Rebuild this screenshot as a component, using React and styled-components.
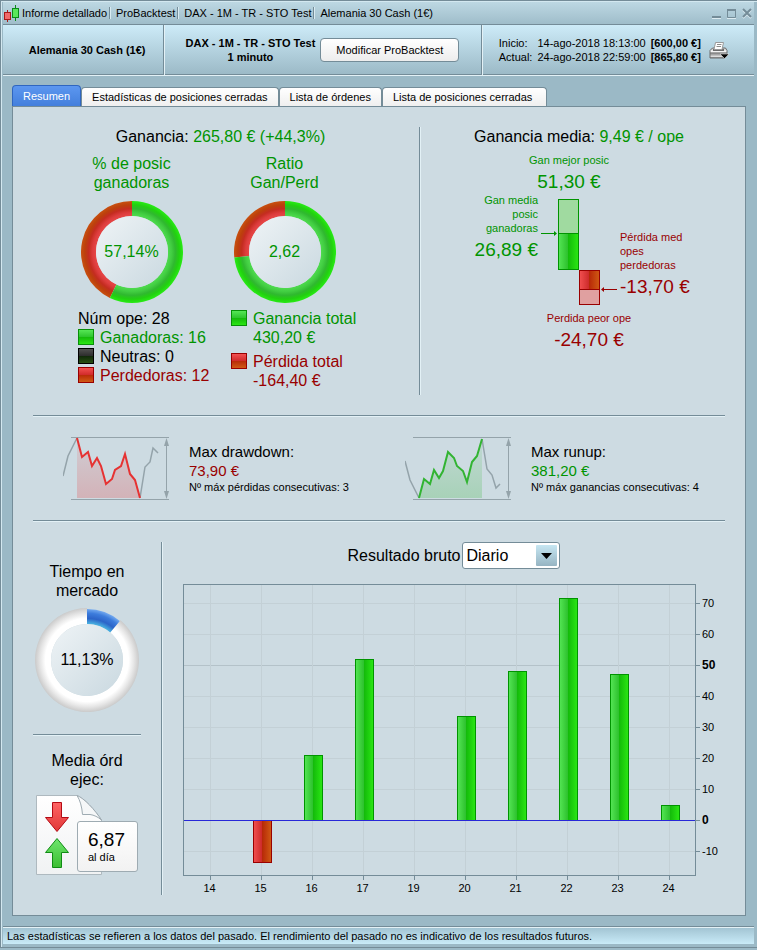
import React, { useState } from "react";
import styled, { createGlobalStyle, css } from "styled-components";

const GREEN = "#009400";
const RED = "#990000";
const LINE = "#748c98";
const LIGHT = "#e3f1f6";

const GlobalStyle = createGlobalStyle`
  * {
    box-sizing: border-box;
  }

  body {
    margin: 0;
    background: #9bb9c6;
    color: #000;
    font-family: "Liberation Sans", Arial, sans-serif;
    font-size: 11px;
    line-height: 14px;
  }

  h2, p {
    margin: 0;
    font-weight: normal;
  }

  svg {
    display: block;
  }
`;

/**
 * Window frame
 */

const Window = styled.div`
  display: flex;
  flex-direction: column;
  min-height: calc(100vh - 2px);
  padding: 1px 3px 3px 2px;
  border: 1px solid ${LINE};
  border-right: 0;
  box-shadow: inset 1px 1px #d3e8f0;
  background: #9bb9c6;
`;

const TitleBar = styled.header`
  display: flex;
  align-items: center;
  height: 22px;
  padding-right: 1px;
  background: linear-gradient(#bdd8e3, #9fbdca);
`;

const Crumb = styled.span`
  padding: 0 3px 0 5px;
  line-height: 12px;
  white-space: nowrap;

  &:not(:last-of-type) {
    border-right: 1px solid #d9ebf2;
    box-shadow: inset -1px 0 ${LINE};
  }

  &:first-of-type {
    padding-left: 2px;
  }
`;

const WindowButtons = styled.div`
  display: flex;
  gap: 3px;
  margin-left: auto;
`;

const IconButton = styled.button`
  padding: 0;
  border: 0;
  background: none;
  cursor: pointer;
`;

const Toolbar = styled.div`
  display: grid;
  grid-template-columns: 160fr 317fr 273fr;
  height: 52px;
  border-top: 1px solid ${LINE};
  border-bottom: 1px solid ${LIGHT};
  box-shadow: inset 0 -1px ${LINE};
  background: linear-gradient(#cdebf8, #9bb9c6);
`;

const ToolbarCell = styled.div`
  display: flex;
  align-items: center;
  justify-content: center;
  gap: 5px;
  white-space: nowrap;

  &:first-child {
    padding-left: 8px;
  }

  & + & {
    border-left: 1px solid ${LINE};
    box-shadow: inset 1px 0 ${LIGHT};
  }

  &:last-child {
    gap: 8px;
    padding-right: 8px;
  }
`;

const Strong = styled.strong`
  text-align: center;
`;

const ModifyButton = styled.button`
  height: 24px;
  padding: 0 15px;
  border: 1px solid ${LINE};
  border-radius: 4px;
  background: linear-gradient(#fff, #ededed);
  font: inherit;
  cursor: pointer;
`;

const Dates = styled.dl`
  display: grid;
  grid-template-columns: auto auto auto;
  column-gap: 5px;
  margin: 0;

  dd {
    margin: 0;
  }
`;

/**
 * Tabs
 */

const Tabs = styled.div`
  display: flex;
  align-items: flex-end;
  height: 21px;
  margin: 9px 9px 0;
`;

const Tab = styled.button`
  height: 19px;
  padding: 0 10px;
  border: 1px solid ${LINE};
  border-bottom: 0;
  border-radius: 4px 4px 0 0;
  background: linear-gradient(#fff, #efefef);
  font: inherit;
  white-space: nowrap;
  cursor: pointer;

  &:last-child {
    padding-right: 14px;
  }

  ${({ $active }) =>
    $active &&
    css`
      height: 21px;
      border-color: #2f66c0;
      background: linear-gradient(#5c97f0, #437fdc);
      color: #fff;
    `}
`;

const Panel = styled.main`
  flex: 1;
  display: flex;
  flex-direction: column;
  margin: 0 8px 10px 9px;
  padding: 20px;
  border: 1px solid ${LINE};
  background: #cddbe2;
`;

const Rule = styled.hr`
  width: 100%;
  height: 2px;
  margin: ${({ $compact }) => ($compact ? "14px 0 7px" : "20px 0 19px")};
  border: 0;
  border-top: 1px solid ${LINE};
  border-bottom: 1px solid ${LIGHT};
`;

const verticalRule = css`
  border-right: 1px solid ${LIGHT};
  box-shadow: inset -1px 0 ${LINE};
`;

/**
 * Text
 */

const tone = css`
  color: ${({ $tone }) => ({ gain: GREEN, loss: RED })[$tone] || "inherit"};
`;

const Heading = styled.h2`
  font-size: 16px;
  line-height: 20px;
  text-align: center;
  ${tone}
`;

const Title = styled.p`
  font-size: 16px;
  line-height: 19px;
  text-align: center;
  ${tone}
`;

const Tinted = styled.span`
  ${tone}
`;

const Amount = styled.p`
  margin-top: 4px;
  font-size: 19px;
  line-height: 22px;
`;

/**
 * Profit section
 */

const Profit = styled.section`
  display: grid;
  grid-template-columns: 388fr 304fr;
  height: 268px;
`;

const Totals = styled.div`
  padding-right: 12px;
  ${verticalRule}
`;

const Ratios = styled.div`
  display: grid;
  grid-template-columns: 153px 153px;
  margin: 7px 0 0 22px;
`;

const Ratio = styled.div`
  display: flex;
  flex-direction: column;
  gap: 9px;
`;

const DonutWrap = styled.div`
  display: grid;
  place-items: center;
  font-size: 16px;
  ${tone}

  & > * {
    grid-area: 1 / 1;
  }
`;

const Legend = styled.div`
  display: flex;
  flex-direction: column;
  gap: ${({ $gap }) => $gap || 0}px;
  padding-left: 23px;
  margin-top: -3px;
  font-size: 16px;
  line-height: 19px;
  white-space: nowrap;
`;

const LegendItem = styled.div`
  display: flex;
  gap: 6px;
  ${tone}
`;

const swatches = {
  gain: ["#089008", "linear-gradient(#55e655, #2cc42c 50%, #14b80a 50%, #2be614)"],
  none: ["#000", "linear-gradient(#505050, #2c2c2c 50%, #10280a 50%, #274f12)"],
  loss: ["#990000", "linear-gradient(#f25050, #d02a2a 50%, #b82a08 50%, #d05a14)"],
};

const Swatch = styled.span`
  flex: none;
  width: 16px;
  height: 16px;
  margin-top: 1px;
  border: 1px solid ${({ $kind }) => swatches[$kind][0]};
  background: ${({ $kind }) => swatches[$kind][1]};
`;

const Average = styled.div`
  padding-left: 12px;
  text-align: center;
`;

const Extreme = styled.div`
  margin-top: ${({ $best }) => ($best ? "6px" : "5px")};
  padding: ${({ $best }) => ($best ? "0 20px 0 0" : "0 0 0 20px")};
  ${tone}
`;

const Spread = styled.div`
  display: grid;
  grid-template-columns: 1fr 78px 1fr;
  gap: 2px;

  svg {
    margin-top: 5px;
  }
`;

const SpreadText = styled.div`
  text-align: ${({ $align }) => $align};
  padding-top: ${({ $tone }) => ($tone === "loss" ? 37 : 0)}px;
  ${tone}
`;

/**
 * Extremes section
 */

const Extremes = styled.section`
  display: grid;
  grid-template-columns: 342fr 350fr;
  height: 64px;
`;

const ExtremeRow = styled.div`
  display: flex;
  align-items: center;
  gap: 18px;
  padding-left: 30px;
`;

const Line = styled.p`
  font-size: 15px;
  line-height: 19px;
  ${tone}
`;

/**
 * Market section
 */

const Market = styled.section`
  flex: 1;
  display: flex;
  gap: 20px;
  padding-top: 1px;
`;

const Side = styled.div`
  flex: none;
  display: flex;
  flex-direction: column;
  gap: 8px;
  width: 130px;
  padding: 20px 21px 0 0;
  ${verticalRule}
`;

const Orders = styled.div`
  display: grid;
  justify-content: start;
  margin-top: -2px;
  padding-left: 3px;

  & > * {
    grid-area: 1 / 1;
  }
`;

const OrdersCard = styled.div`
  width: 61px;
  height: 51px;
  margin: 26px 0 0 41px;
  padding: 8px 0 0 10px;
  border: 1px solid #9eabb2;
  border-radius: 3px;
  background: linear-gradient(#fff, #f2f2f2);
`;

const OrdersValue = styled.p`
  font-size: 19px;
  line-height: 20px;
`;

const Result = styled.div`
  flex: 1;
  min-width: 0;
`;

const Picker = styled.label`
  display: flex;
  align-items: center;
  justify-content: center;
  gap: 2px;
  margin-bottom: 14px;
  font-size: 16px;
`;

const SelectWrap = styled.span`
  display: grid;
  align-items: center;

  & > * {
    grid-area: 1 / 1;
  }

  svg {
    justify-self: end;
    margin-right: 3px;
    pointer-events: none;
  }
`;

const Select = styled.select`
  appearance: none;
  width: 98px;
  height: 27px;
  padding: 0 26px 0 3px;
  border: 1px solid ${LINE};
  border-radius: 3px;
  background: #fff;
  color: #000;
  font: inherit;
`;

const StatusBar = styled.footer`
  height: 18px;
  padding-left: 4px;
  border-top: 1px solid ${LINE};
  box-shadow: inset 0 1px ${LIGHT};
  background: linear-gradient(#a0c2d1, #c9ebf8);
  line-height: 18px;
`;

/**
 * Drawings
 */

function Candles() {
  return (
    <svg width="17" height="17" viewBox="0 0 17 17">
      <path d="M4.500 5v12" stroke="#a81818" />
      <path d="M12.500 0v16" stroke="#0a8a1a" />
      <rect x="1.500" y="7.500" width="6" height="7" fill="#f06a6a" stroke="#a81818" />
      <rect x="9.500" y="3.500" width="6" height="9" fill="#5ae65a" stroke="#0a8a1a" />
    </svg>
  );
}

function Printer() {
  return (
    <svg width="20" height="18" viewBox="0 0 20 18">
      <defs>
        <linearGradient id="printer" x1="0" y1="0" x2="0" y2="1">
          <stop offset="0" stopColor="#c4c4c4" />
          <stop offset="0.350" stopColor="#f4f4f4" />
          <stop offset="0.500" stopColor="#7c7c7c" />
          <stop offset="0.850" stopColor="#dcdcdc" />
          <stop offset="1" stopColor="#777" />
        </linearGradient>
      </defs>
      <path d="M1 9.500L3.500 7h13L18 9.500V15l-2 2H1z" fill="url(#printer)" stroke="#6c6c6c" />
      <path d="M4 9h11" stroke="#444" strokeWidth="1.500" />
      <path d="M6.500 1.500h8l-1.500 7H5z" fill="#fff" stroke="#999" />
      <path d="M8 3.500h4.500M7.500 5.500h4.500" stroke="#8c8c8c" />
      <path d="M11 13h9l-4.500 4.500z" fill="#000" stroke="#fff" strokeWidth="0.500" />
    </svg>
  );
}

const point = (c, r, turn) => {
  const a = turn * 2 * Math.PI;
  return `${c + r * Math.sin(a)} ${c - r * Math.cos(a)}`;
};

const sector = (c, r, inner, from, to) => {
  const large = to - from > 0.5 ? 1 : 0;
  return `M${point(c, r, from)}A${r} ${r} 0 ${large} 1 ${point(c, r, to)}L${point(c, inner, to)}A${inner} ${inner} 0 ${large} 0 ${point(c, inner, from)}Z`;
};

function Ring({ id, size, share, colors, rest }) {
  const c = size / 2;
  return (
    <svg width={size} height={size} viewBox={`0 0 ${size} ${size}`}>
      <defs>
        {[colors, rest].map((list, i) => (
          <radialGradient key={i} id={`${id}${i}`} gradientUnits="userSpaceOnUse" cx={c} cy={c} r={c}>
            {list.map((color, n) => (
              <stop key={n} offset={0.7 + (0.3 * n) / (list.length - 1)} stopColor={color} />
            ))}
          </radialGradient>
        ))}
        <linearGradient id={`${id}c`} x1="0" y1="0" x2="1" y2="1">
          <stop offset="0.1" stopColor="#ebf1f4" />
          <stop offset="0.9" stopColor="#cddbe2" />
        </linearGradient>
      </defs>
      <path d={sector(c, c, 36, share, 1)} fill={`url(#${id}1)`} />
      <path d={sector(c, c - (id === "time" ? 1 : 0), 36, 0, share)} fill={`url(#${id}0)`} />
      <circle cx={c} cy={c} r="36" fill={`url(#${id}c)`} />
    </svg>
  );
}

const ringGain = ["#50dc50", "#42ce42", "#30b830", "#22d010", "#28ec14"];
const ringLoss = ["#e84848", "#dc3c3c", "#c42c20", "#bc400c", "#c85010"];

function Donut({ tone: kind, children, ...ring }) {
  return (
    <DonutWrap $tone={kind}>
      <Ring {...ring} />
      <span>{children}</span>
    </DonutWrap>
  );
}

function BarFills() {
  return (
    <defs>
      <linearGradient id="barGain">
        <stop offset="0" stopColor="#55e655" />
        <stop offset="0.48" stopColor="#2cc02c" />
        <stop offset="0.5" stopColor="#14bc0a" />
        <stop offset="1" stopColor="#2be814" />
      </linearGradient>
      <linearGradient id="barLoss">
        <stop offset="0" stopColor="#f25050" />
        <stop offset="0.48" stopColor="#cc2a2a" />
        <stop offset="0.5" stopColor="#b82a08" />
        <stop offset="1" stopColor="#d05a14" />
      </linearGradient>
    </defs>
  );
}

function SpreadChart() {
  return (
    <svg width="78" height="108" viewBox="0 0 78 108">
      <BarFills />
      <g stroke={GREEN}>
        <rect x="18.500" y="1.500" width="20" height="34" fill="#a0daa0" />
        <rect x="18.500" y="35.500" width="20" height="36" fill="url(#barGain)" />
        <path d="M1 35.500h14" />
      </g>
      <path d="M14 33l3 2.500-3 2.500z" fill={GREEN} />
      <g stroke={RED}>
        <rect x="39.500" y="72.500" width="20" height="19" fill="url(#barLoss)" />
        <rect x="39.500" y="91.500" width="20" height="15" fill="#e0a0a0" />
        <path d="M63 91.500h14" />
      </g>
      <path d="M64 89l-3 2.500 3 2.500z" fill={RED} />
    </svg>
  );
}

const curves = {
  loss: {
    color: "#e63232",
    line: "14,2 19,21 25,16 29,30 34,22 38,30 43,48 49,43 52,34 58,30 62,18 67,38 72,44 77,62",
    corner: "14,62",
    before: "0,40 5,20 14,2",
    after: "77,62 82,31 87,26 90,12 95,17",
  },
  gain: {
    color: "#32b432",
    line: "14,62 19,43 25,48 29,34 34,42 38,35 43,16 49,22 52,30 58,35 62,46 67,26 72,20 77,3",
    corner: "77,62",
    before: "0,25 5,44 14,62",
    after: "77,3 82,33 87,39 91,52 95,48",
  },
};

function Curve({ kind }) {
  const { color, line, corner, before, after } = curves[kind];
  return (
    <svg width="108" height="64" viewBox="0 0 108 64" fill="none">
      <defs>
        <linearGradient id={`area-${kind}`} x1="0" y1="0" x2="0" y2="1">
          <stop offset="0" stopColor={color} stopOpacity="0.080" />
          <stop offset="1" stopColor={color} stopOpacity="0.240" />
        </linearGradient>
      </defs>
      <path d="M8 1.500h98M8 63.500h98M103.500 4v57" stroke="#94a3aa" />
      <path d="M101 10l2.500-8 2.500 8zM101 55l2.500 8 2.500-8z" fill="#94a3aa" />
      <polygon points={`${line} ${corner}`} fill={`url(#area-${kind})`} />
      <polyline points={before} stroke="#94a3aa" strokeWidth="1.500" />
      <polyline points={after} stroke="#94a3aa" strokeWidth="1.500" />
      <polyline points={line} stroke={color} strokeWidth="2" />
    </svg>
  );
}

function OrdersIcon() {
  return (
    <svg width="67" height="81" viewBox="0 0 67 81">
      <defs>
        <linearGradient id="arrowDown" x1="0" y1="0" x2="0" y2="1">
          <stop offset="0" stopColor="#ff6464" />
          <stop offset="1" stopColor="#e03838" />
        </linearGradient>
        <linearGradient id="arrowUp" x1="0" y1="0" x2="0" y2="1">
          <stop offset="0" stopColor="#6ee66e" />
          <stop offset="1" stopColor="#3cbe32" />
        </linearGradient>
        <linearGradient id="sheet" x1="0" y1="0" x2="0" y2="1">
          <stop offset="0" stopColor="#fff" />
          <stop offset="1" stopColor="#f0f2f3" />
        </linearGradient>
      </defs>
      <path d="M0.500 0.500H41C48 3 59 15 65.500 25V79.500H0.500z" fill="url(#sheet)" stroke="#aeb9bf" />
      <path d="M41 0.500C44 5 46 12 46.500 19.500H54C58 20 62 22 65.500 25C59 15 48 3 41 0.500z" fill="#f5f7f8" stroke="#9eabb2" />
      <path d="M16.500 7.500h9v15h7L21 36.500 9.500 22.500h7z" fill="url(#arrowDown)" stroke="#b40a14" />
      <path d="M21 43.500l11.500 14h-7v15h-9v-15h-7z" fill="url(#arrowUp)" stroke="#108c14" />
    </svg>
  );
}

const days = [
  { day: 14, value: 0 },
  { day: 15, value: -13.7 },
  { day: 16, value: 21 },
  { day: 17, value: 52 },
  { day: 19, value: 0 },
  { day: 20, value: 33.6 },
  { day: 21, value: 48.2 },
  { day: 22, value: 71.6 },
  { day: 23, value: 47.2 },
  { day: 24, value: 4.8 },
];

const ticks = [70, 60, 50, 40, 30, 20, 10, 0, -10];

const ChartSvg = styled.svg`
  width: 100%;
  height: auto;
  font-size: 11px;
  shape-rendering: crispEdges;
`;

const AxisLabel = styled.text`
  text-anchor: ${({ $axis }) => ($axis === "x" ? "middle" : "start")};
  ${({ $bold }) => $bold && "font-size: 12px; font-weight: bold;"}
`;

function DailyChart() {
  const x = (i) => 27.5 + i * 51;
  const y = (v) => Math.round(237 - v * 3.1) + 0.5;
  return (
    <ChartSvg viewBox="0 0 542 311" role="img" aria-label="Resultado bruto">
      <BarFills />
      {ticks.map((t) => (
        <g key={t}>
          <path d={`M1 ${y(t)}h511`} stroke={t === 50 ? "#b4c2c9" : "#c3d0d6"} />
          <path d={`M513 ${y(t)}h4`} stroke={LINE} />
          <AxisLabel x="519" y={y(t) + 3.5} $bold={t % 50 === 0}>
            {t}
          </AxisLabel>
        </g>
      ))}
      {days.map(({ day }, i) => (
        <g key={day}>
          <path d={`M${x(i)} 1v292`} stroke="#c3d0d6" />
          <path d={`M${x(i)} 293v4`} stroke={LINE} />
          <AxisLabel x={x(i) - 1} y="309" $axis="x">
            {day}
          </AxisLabel>
        </g>
      ))}
      <rect x="0.500" y="1.500" width="512" height="291" fill="none" stroke={LINE} />
      {days.map(
        ({ day, value }, i) =>
          value !== 0 && (
            <rect
              key={day}
              x={x(i) - 8}
              y={Math.min(y(value), y(0))}
              width="18"
              height={Math.abs(y(value) - y(0))}
              fill={`url(#${value > 0 ? "barGain" : "barLoss"})`}
              stroke={value > 0 ? GREEN : RED}
            />
          )
      )}
      <path d={`M1 ${y(0)}h511`} stroke="#2828d8" />
    </ChartSvg>
  );
}

const tabs = [
  "Resumen",
  "Estadísticas de posiciones cerradas",
  "Lista de órdenes",
  "Lista de posiciones cerradas",
];

function App() {
  const [tab, setTab] = useState(tabs[0]);

  return (
    <Window>
      <GlobalStyle />
      <TitleBar>
        <Candles />
        <Crumb>Informe detallado</Crumb>
        <Crumb>ProBacktest</Crumb>
        <Crumb>DAX - 1M - TR - STO Test</Crumb>
        <Crumb>Alemania 30 Cash (1€)</Crumb>
        <WindowButtons>
          <IconButton aria-label="Minimizar">
            <svg width="12" height="12" viewBox="0 0 12 12">
              <path d="M1 10h9" stroke="#748c98" strokeWidth="2" />
              <path d="M1 11.500h9" stroke="#dcebf1" />
            </svg>
          </IconButton>
          <IconButton aria-label="Maximizar">
            <svg width="12" height="12" viewBox="0 0 12 12" fill="none">
              <path d="M1 11.500h9" stroke="#dcebf1" />
              <path d="M1.500 2.500h8v8h-8z" stroke="#748c98" />
              <path d="M1 3h9" stroke="#748c98" strokeWidth="2" />
            </svg>
          </IconButton>
          <IconButton aria-label="Cerrar">
            <svg width="12" height="12" viewBox="0 0 12 12" fill="none">
              <path d="M2 3l8 8M10 3l-8 8" stroke="#dcebf1" strokeWidth="2" />
              <path d="M2 2l8 8M10 2l-8 8" stroke="#748c98" strokeWidth="2" />
            </svg>
          </IconButton>
        </WindowButtons>
      </TitleBar>

      <Toolbar>
        <ToolbarCell>
          <Strong>Alemania 30 Cash (1€)</Strong>
        </ToolbarCell>
        <ToolbarCell>
          <Strong>
            DAX - 1M - TR - STO Test
            <br />1 minuto
          </Strong>
          <ModifyButton>Modificar ProBacktest</ModifyButton>
        </ToolbarCell>
        <ToolbarCell>
          <Dates>
            <dt>Inicio:</dt>
            <dd>14-ago-2018 18:13:00</dd>
            <dd>
              <b>[600,00 €]</b>
            </dd>
            <dt>Actual:</dt>
            <dd>24-ago-2018 22:59:00</dd>
            <dd>
              <b>[865,80 €]</b>
            </dd>
          </Dates>
          <IconButton aria-label="Imprimir">
            <Printer />
          </IconButton>
        </ToolbarCell>
      </Toolbar>

      <Tabs role="tablist">
        {tabs.map((name) => (
          <Tab
            key={name}
            role="tab"
            aria-selected={tab === name}
            $active={tab === name}
            onClick={() => setTab(name)}
          >
            {name}
          </Tab>
        ))}
      </Tabs>

      <Panel>
        <Profit>
          <Totals>
            <Heading>
              Ganancia: <Tinted $tone="gain">265,80 € (+44,3%)</Tinted>
            </Heading>
            <Ratios>
              <Ratio>
                <Title $tone="gain">
                  % de posic
                  <br />
                  ganadoras
                </Title>
                <Donut id="wins" size={102} share={0.5714} colors={ringGain} rest={ringLoss} tone="gain">
                  57,14%
                </Donut>
                <Legend>
                  <span>Núm ope: 28</span>
                  <LegendItem $tone="gain">
                    <Swatch $kind="gain" />
                    Ganadoras: 16
                  </LegendItem>
                  <LegendItem>
                    <Swatch $kind="none" />
                    Neutras: 0
                  </LegendItem>
                  <LegendItem $tone="loss">
                    <Swatch $kind="loss" />
                    Perdedoras: 12
                  </LegendItem>
                </Legend>
              </Ratio>
              <Ratio>
                <Title $tone="gain">
                  Ratio
                  <br />
                  Gan/Perd
                </Title>
                <Donut id="ratio" size={102} share={0.7325} colors={ringGain} rest={ringLoss} tone="gain">
                  2,62
                </Donut>
                <Legend $gap={5}>
                  <LegendItem $tone="gain">
                    <Swatch $kind="gain" />
                    <span>
                      Ganancia total
                      <br />
                      430,20 €
                    </span>
                  </LegendItem>
                  <LegendItem $tone="loss">
                    <Swatch $kind="loss" />
                    <span>
                      Pérdida total
                      <br />
                      -164,40 €
                    </span>
                  </LegendItem>
                </Legend>
              </Ratio>
            </Ratios>
          </Totals>

          <Average>
            <Heading>
              Ganancia media: <Tinted $tone="gain">9,49 € / ope</Tinted>
            </Heading>
            <Extreme $best $tone="gain">
              <p>Gan mejor posic</p>
              <Amount>51,30 €</Amount>
            </Extreme>
            <Spread>
              <SpreadText $align="right" $tone="gain">
                <p>
                  Gan media
                  <br />
                  posic
                  <br />
                  ganadoras
                </p>
                <Amount>26,89 €</Amount>
              </SpreadText>
              <SpreadChart />
              <SpreadText $align="left" $tone="loss">
                <p>
                  Pérdida med
                  <br />
                  opes
                  <br />
                  perdedoras
                </p>
                <Amount>-13,70 €</Amount>
              </SpreadText>
            </Spread>
            <Extreme $tone="loss">
              <p>Perdida peor ope</p>
              <Amount>-24,70 €</Amount>
            </Extreme>
          </Average>
        </Profit>

        <Rule />

        <Extremes>
          <ExtremeRow>
            <Curve kind="loss" />
            <div>
              <Line>Max drawdown:</Line>
              <Line $tone="loss">73,90 €</Line>
              <p>Nº máx pérdidas consecutivas: 3</p>
            </div>
          </ExtremeRow>
          <ExtremeRow>
            <Curve kind="gain" />
            <div>
              <Line>Max runup:</Line>
              <Line $tone="gain">381,20 €</Line>
              <p>Nº máx ganancias consecutivas: 4</p>
            </div>
          </ExtremeRow>
        </Extremes>

        <Rule />

        <Market>
          <Side>
            <Title>
              Tiempo en
              <br />
              mercado
            </Title>
            <Donut
              id="time"
              size={104}
              share={0.1113}
              colors={["#48b0e0", "#2c64c8", "#3c7cdc", "#80b4f4"]}
              rest={["#fff", "#fff", "#e6e6e6", "#cacaca"]}
            >
              11,13%
            </Donut>
            <Rule $compact />
            <Title>
              Media órd
              <br />
              ejec:
            </Title>
            <Orders>
              <OrdersIcon />
              <OrdersCard>
                <OrdersValue>6,87</OrdersValue>
                <p>al día</p>
              </OrdersCard>
            </Orders>
          </Side>

          <Result>
            <Picker>
              Resultado bruto
              <SelectWrap>
                <Select defaultValue="Diario">
                  <option>Diario</option>
                  <option>Semanal</option>
                  <option>Mensual</option>
                </Select>
                <svg width="21" height="21" viewBox="0 0 21 21">
                  <defs>
                    <linearGradient id="drop" x1="0" y1="0" x2="0" y2="1">
                      <stop offset="0" stopColor="#c6e6f2" />
                      <stop offset="1" stopColor="#96b4c2" />
                    </linearGradient>
                  </defs>
                  <rect width="21" height="21" rx="1" fill="url(#drop)" />
                  <path d="M5 8h11l-5.500 6z" />
                </svg>
              </SelectWrap>
            </Picker>
            <DailyChart />
          </Result>
        </Market>
      </Panel>

      <StatusBar>
        Las estadísticas se refieren a los datos del pasado. El rendimiento del
        pasado no es indicativo de los resultados futuros.
      </StatusBar>
    </Window>
  );
}

export default App;
